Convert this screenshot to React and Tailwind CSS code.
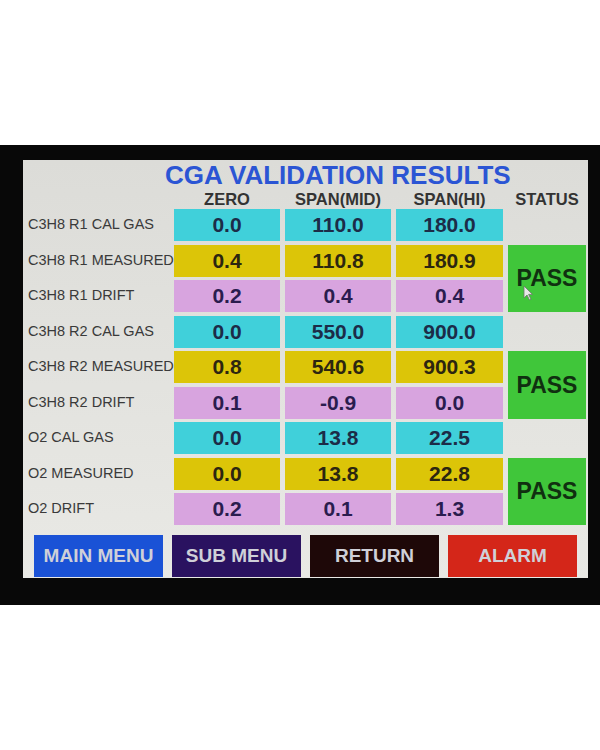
// App.jsx - CGA validation results touch panel
const rows = [
  { label: 'C3H8 R1 CAL GAS', kind: 'cal', values: ['0.0', '110.0', '180.0'] },
  { label: 'C3H8 R1 MEASURED', kind: 'meas', values: ['0.4', '110.8', '180.9'] },
  { label: 'C3H8 R1 DRIFT', kind: 'drift', values: ['0.2', '0.4', '0.4'] },
  { label: 'C3H8 R2 CAL GAS', kind: 'cal', values: ['0.0', '550.0', '900.0'] },
  { label: 'C3H8 R2 MEASURED', kind: 'meas', values: ['0.8', '540.6', '900.3'] },
  { label: 'C3H8 R2 DRIFT', kind: 'drift', values: ['0.1', '-0.9', '0.0'] },
  { label: 'O2 CAL GAS', kind: 'cal', values: ['0.0', '13.8', '22.5'] },
  { label: 'O2 MEASURED', kind: 'meas', values: ['0.0', '13.8', '22.8'] },
  { label: 'O2 DRIFT', kind: 'drift', values: ['0.2', '0.1', '1.3'] },
];

const cellStyle = {
  cal: 'bg-[#40d0da] text-[#1c2c48]',
  meas: 'bg-[#dcc508] text-[#2c2610]',
  drift: 'bg-[#d8a4df] text-[#2a1c4e]',
};

const buttons = [
  { text: 'MAIN MENU', cls: 'bg-[#1a52d6]' },
  { text: 'SUB MENU', cls: 'bg-[#2a1260]' },
  { text: 'RETURN', cls: 'bg-[#1e0808]' },
  { text: 'ALARM', cls: 'bg-[#d42619]' },
];

function Cursor() {
  return (
    <svg className="absolute left-[15px] top-[40px]" width="10" height="16" viewBox="0 0 10 16">
      <path d="M1 1 L1 13 L4 10 L6.5 15 L8 14.3 L5.6 9.4 L9.5 9.4 Z" fill="#e8e8e8" stroke="#6a7a6a" strokeWidth="0.8" />
    </svg>
  );
}

export default function App() {
  return (
    <div className="w-[600px] h-[750px] bg-white flex flex-col font-['Liberation_Sans',Arial,sans-serif]">
      <div className="h-[145px]" />

      {/* bezel */}
      <div className="h-[460px] bg-[#080808] pl-[23px] pt-[15px] pr-[12px]">
        {/* screen */}
        <div className="w-[565px] h-[418px] bg-gradient-to-b from-[#dcdcd8] to-[#e9e9e5] pt-[2px] flex flex-col">
          <div className="h-[26px] leading-[26px] pl-[142px] text-[26px] font-bold text-[#2b55d4] whitespace-nowrap">
            CGA VALIDATION RESULTS
          </div>

          {/* column headers */}
          <div className="mt-[3px] h-[17px] grid grid-cols-[146px_106px_106px_107px_78px] gap-x-[5px] text-[16.5px] leading-[17px] font-bold text-[#333333] text-center">
            <div />
            <div>ZERO</div>
            <div>SPAN(MID)</div>
            <div>SPAN(HI)</div>
            <div>STATUS</div>
          </div>

          <div className="mt-[1px] flex gap-x-[5px]">
            {/* values */}
            <div className="grid grid-cols-[146px_106px_106px_107px] grid-rows-[repeat(9,32px)] gap-x-[5px] gap-y-[3.5px]">
              {rows.map((r) => (
                <div key={r.label} className="contents">
                  <div className="pl-[5px] flex items-center text-[14.5px] text-[#3a3a3a] whitespace-nowrap">
                    {r.label}
                  </div>
                  {r.values.map((v, i) => (
                    <div
                      key={i}
                      className={`flex items-center justify-center text-[21px] font-bold ${cellStyle[r.kind]}`}
                    >
                      {v}
                    </div>
                  ))}
                </div>
              ))}
            </div>

            {/* status */}
            <div className="w-[78px] grid grid-rows-[repeat(9,32px)] gap-y-[3.5px]">
              <div className="row-start-2 row-span-2 relative bg-[#40c63a] flex items-center justify-center text-[23px] font-bold text-[#103010]">
                PASS
                <Cursor />
              </div>
              <div className="row-start-5 row-span-2 bg-[#40c63a] flex items-center justify-center text-[23px] font-bold text-[#103010]">
                PASS
              </div>
              <div className="row-start-8 row-span-2 bg-[#40c63a] flex items-center justify-center text-[23px] font-bold text-[#103010]">
                PASS
              </div>
            </div>
          </div>

          {/* bottom buttons */}
          <div className="mt-[10px] px-[11px] grid grid-cols-4 gap-x-[9px]">
            {buttons.map((b) => (
              <div
                key={b.text}
                className={`h-[42px] flex items-center justify-center text-[19px] font-bold text-[#cfd0d8] ${b.cls}`}
              >
                {b.text}
              </div>
            ))}
          </div>
        </div>
      </div>

      <div className="flex-1" />
    </div>
  );
}
